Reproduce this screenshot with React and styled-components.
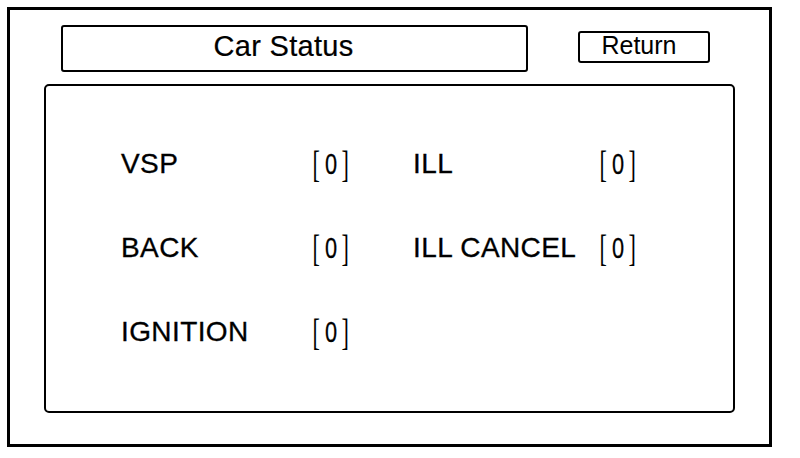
import { Fragment } from "react";
import styled, { createGlobalStyle } from "styled-components";

const GlobalStyle = createGlobalStyle`
  html, body {
    margin: 0;
    padding: 0;
    background: #fff;
  }
  body {
    font-family: "Liberation Sans", Arial, sans-serif;
    color: #000;
  }
`;

const Page = styled.div`
  width: 800px;
  height: 458px;
  padding: 7px 0 0 7px;
  box-sizing: border-box;
`;

const Frame = styled.div`
  width: 765px;
  height: 440px;
  box-sizing: border-box;
  border: 3px solid #000;
  padding: 15px 34px 0 34px;
  display: flex;
  flex-direction: column;
`;

const Header = styled.div`
  display: flex;
  align-items: flex-start;
  padding-left: 17px;
  height: 59px;
`;

const TitleBox = styled.div`
  width: 467px;
  height: 47px;
  box-sizing: border-box;
  border: 2px solid #000;
  border-radius: 3px;
  display: flex;
  align-items: center;
  justify-content: center;
  padding: 0 22px 4px 0;
  font-size: 29px;
  letter-spacing: 0.3px;
  -webkit-text-stroke: 0.2px #000;
`;

const ReturnButton = styled.button`
  margin: 6px 0 0 50px;
  width: 132px;
  height: 32px;
  box-sizing: border-box;
  border: 2px solid #000;
  border-radius: 3px;
  background: #fff;
  color: #000;
  font-family: "Liberation Sans", Arial, sans-serif;
  font-size: 25px;
  line-height: 1;
  padding: 0 10px 3px 0;
  cursor: pointer;
`;

const Panel = styled.div`
  width: 691px;
  height: 329px;
  box-sizing: border-box;
  border: 2px solid #000;
  border-radius: 5px;
  padding: 36px 0 0 75px;
  display: grid;
  grid-template-columns: 192px 100px 187px auto;
  grid-auto-rows: 84px;
  align-content: start;
`;

const Label = styled.div`
  font-size: 28px;
  letter-spacing: 0.4px;
  line-height: 84px;
  height: 84px;
  display: flex;
  align-items: center;
  white-space: nowrap;
  -webkit-text-stroke: 0.3px #000;
`;

const Value = styled.div`
  height: 84px;
  display: flex;
  align-items: center;
  margin-left: -3px;
  font-size: 36px;
  line-height: 1;
`;

const Bracket = styled.span`
  font-family: "Liberation Serif", "Times New Roman", serif;
  font-size: 37px;
  display: inline-block;
  transform: scaleX(0.6);
`;

const Digit = styled.span`
  font-family: "Liberation Sans", Arial, sans-serif;
  font-size: 29px;
  display: inline-block;
  transform: scaleX(0.75);
  margin: 0 0 0 1px;
  -webkit-text-stroke: 0.3px #000;
`;

const rows = [
  ["VSP", "0", "ILL", "0"],
  ["BACK", "0", "ILL CANCEL", "0"],
  ["IGNITION", "0"],
];

function Reading({ value }) {
  return (
    <Value>
      <Bracket>[</Bracket>
      <Digit>{value}</Digit>
      <Bracket>]</Bracket>
    </Value>
  );
}

export default function App() {
  return (
    <Page>
      <GlobalStyle />
      <Frame>
        <Header>
          <TitleBox>Car Status</TitleBox>
          <ReturnButton>Return</ReturnButton>
        </Header>
        <Panel>
          {rows.map((r) => (
            <Fragment key={r[0]}>
              <Label>{r[0]}</Label>
              <Reading value={r[1]} />
              {r[2] ? <Label>{r[2]}</Label> : <div />}
              {r[3] ? <Reading value={r[3]} /> : <div />}
            </Fragment>
          ))}
        </Panel>
      </Frame>
    </Page>
  );
}
